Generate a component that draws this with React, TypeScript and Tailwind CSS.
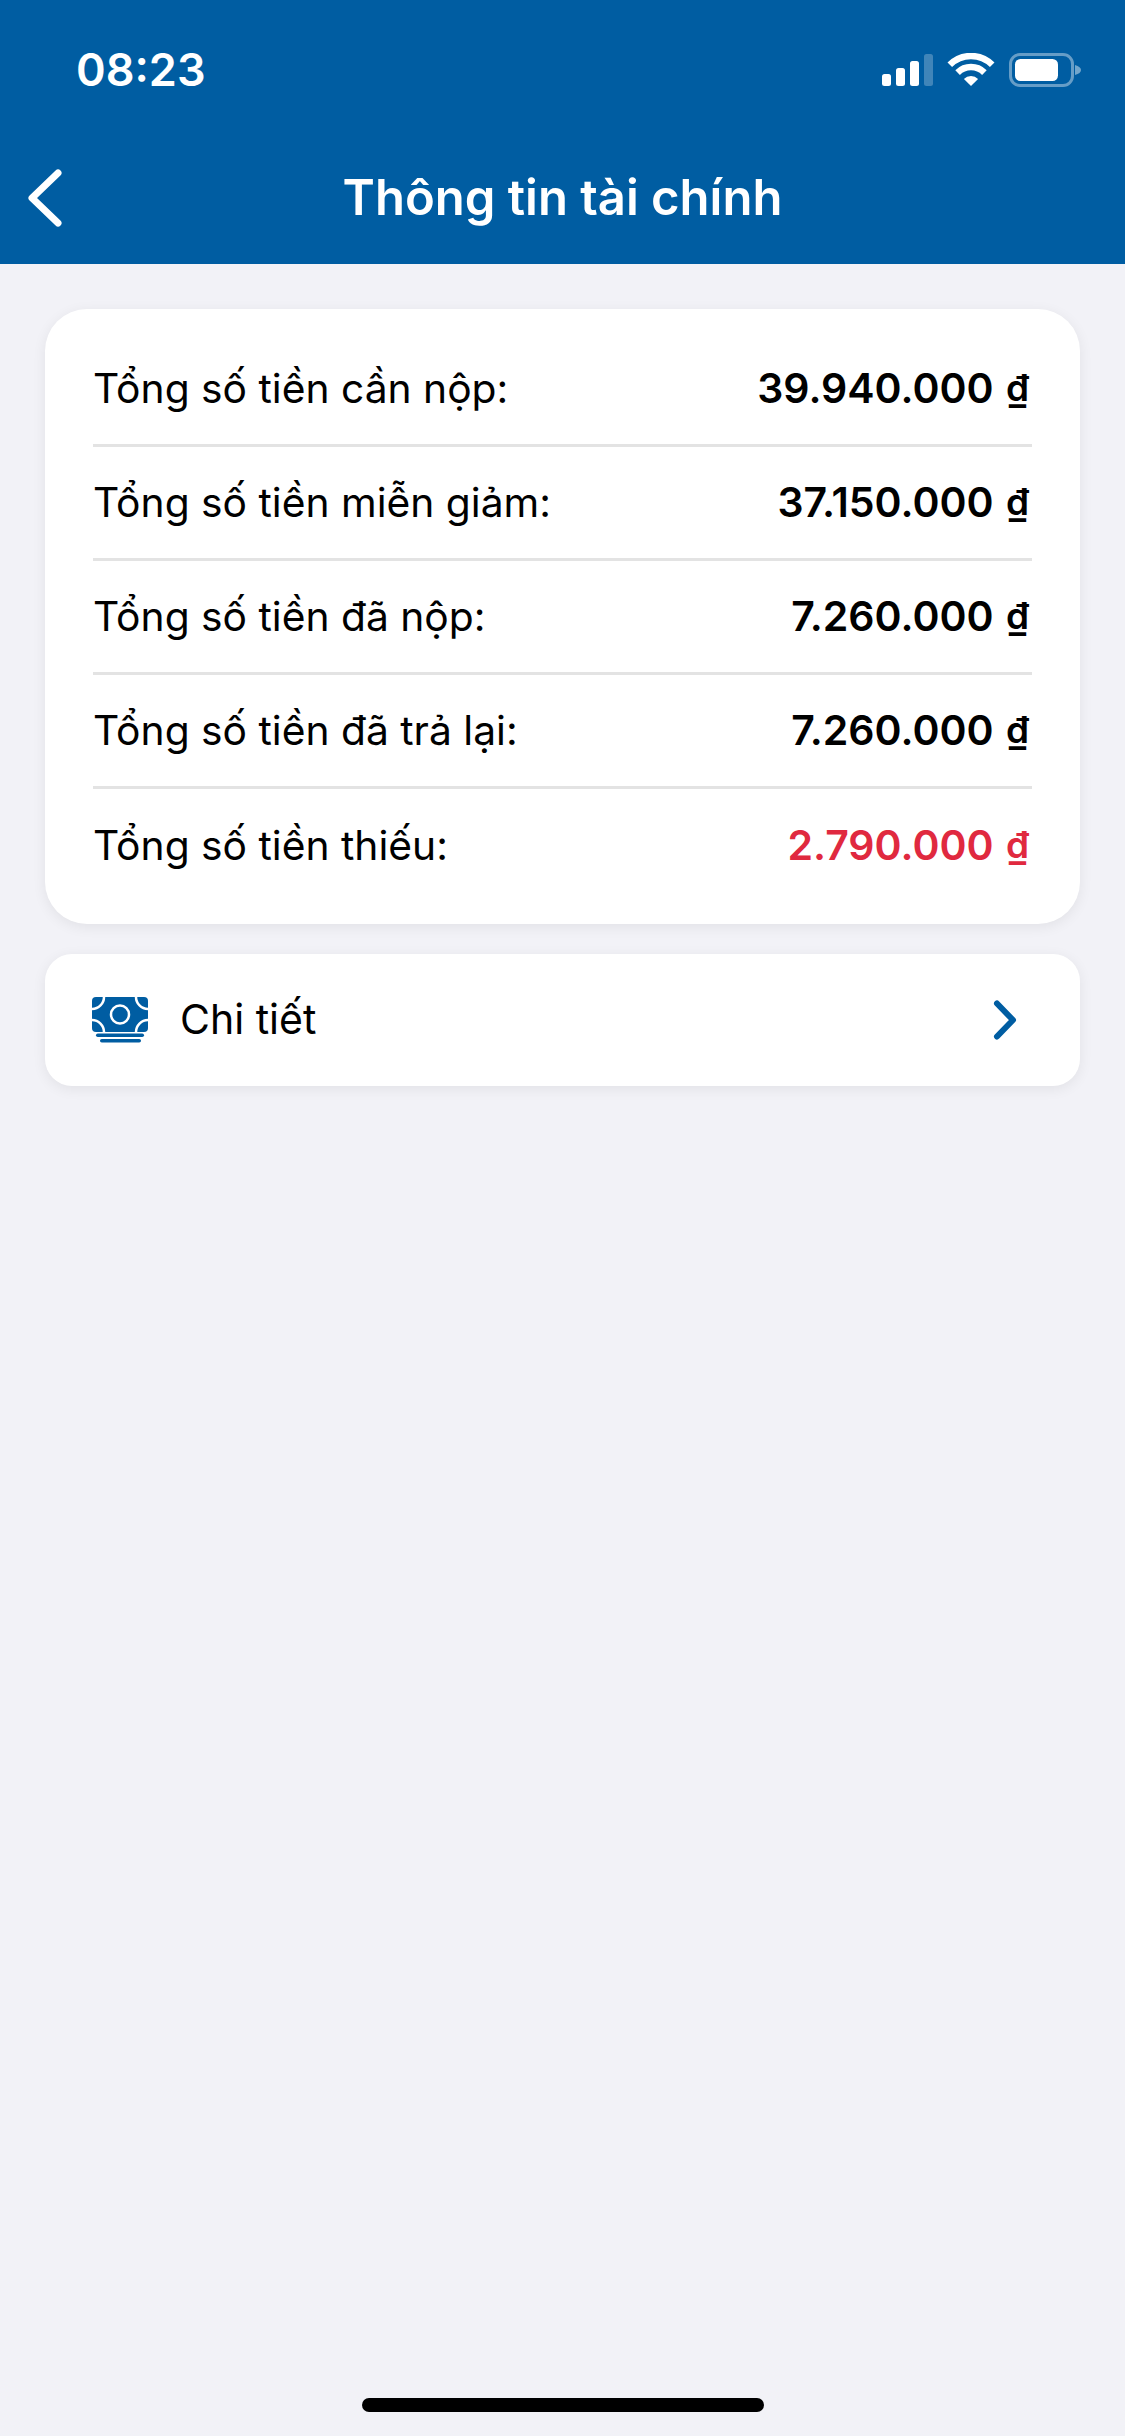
const rows = [
  { label: "Tổng số tiền cần nộp:", value: "39.940.000" },
  { label: "Tổng số tiền miễn giảm:", value: "37.150.000" },
  { label: "Tổng số tiền đã nộp:", value: "7.260.000" },
  { label: "Tổng số tiền đã trả lại:", value: "7.260.000" },
  { label: "Tổng số tiền thiếu:", value: "2.790.000", red: true },
];

function StatusIcons() {
  return (
    <svg width="200" height="34" viewBox="0 0 200 34" fill="none">
      <rect x="0" y="21" width="9" height="12" rx="2.5" fill="white" />
      <rect x="14" y="15" width="9" height="18" rx="2.5" fill="white" />
      <rect x="28" y="8" width="9" height="25" rx="2.5" fill="white" />
      <rect x="42" y="1" width="9" height="32" rx="2.5" fill="white" fillOpacity="0.25" />
      <path d="M67.800 11.800 A30 30 0 0 1 110.200 11.800" stroke="white" strokeWidth="6.500" />
      <path d="M75.600 19.600 A19 19 0 0 1 102.400 19.600" stroke="white" strokeWidth="6.500" />
      <path d="M89 33 L81.900 25.900 A10 10 0 0 1 96.100 25.900 Z" fill="white" />
      <rect x="128.500" y="1.500" width="62" height="31" rx="9.500" stroke="white" strokeOpacity="0.4" strokeWidth="3" />
      <rect x="133" y="6" width="43" height="22" rx="5.500" fill="white" />
      <path d="M193 12 C197 13 199 15 199 17 C199 19 197 21 193 22 Z" fill="white" fillOpacity="0.45" />
    </svg>
  );
}

function MoneyIcon() {
  return (
    <svg width="56" height="46" viewBox="0 0 56 46" fill="none" className="shrink-0">
      <rect width="56" height="35" rx="4" fill="#005da2" />
      <circle cx="0" cy="0" r="12" stroke="white" strokeWidth="2.500" />
      <circle cx="56" cy="0" r="12" stroke="white" strokeWidth="2.500" />
      <circle cx="0" cy="35" r="12" stroke="white" strokeWidth="2.500" />
      <circle cx="56" cy="35" r="12" stroke="white" strokeWidth="2.500" />
      <circle cx="28" cy="17.500" r="9" stroke="white" strokeWidth="2.500" />
      <rect x="4" y="36.500" width="48" height="3.500" rx="1.750" fill="#005da2" />
      <rect x="8" y="42" width="41" height="3.500" rx="1.750" fill="#005da2" />
    </svg>
  );
}

export default function App() {
  return (
    <div className="flex min-h-[2436px] flex-col bg-[#f2f2f7] font-['Inter',sans-serif] text-black">
      <header className="h-[264px] bg-[#005da2] text-white">
        <div className="flex items-center justify-between pl-[76px] pr-[43px] pt-[45px]">
          <span className="text-[45px] leading-[50px] font-semibold">08:23</span>
          <StatusIcons />
        </div>
        <div className="mt-[73px] grid grid-cols-[1fr_auto_1fr] items-center">
          <button className="pl-[26px]">
            <svg width="38" height="60" viewBox="0 0 38 60" fill="none">
              <path d="M32 5 L6 30 L32 55" stroke="white" strokeWidth="7" strokeLinecap="round" strokeLinejoin="round" />
            </svg>
          </button>
          <h1 className="text-[49px] leading-[60px] font-semibold">Thông tin tài chính</h1>
          <div />
        </div>
      </header>

      <main className="flex flex-col gap-[30px] px-[45px] pt-[45px]">
        <section className="rounded-[42px] bg-white px-[48px] pb-[21px] pt-[24px] shadow-[0_3px_14px_rgba(0,0,0,0.07)]">
          {rows.map((row, i) => (
            <div
              key={row.label}
              className={`flex h-[114px] items-center justify-between ${i < rows.length - 1 ? "border-b-[3px] border-[#e3e3e3]" : ""}`}
            >
              <span className="text-[40.750px]">{row.label}</span>
              <span className={`pr-[3px] text-[41px] font-semibold ${row.red ? "text-[#e0293f]" : ""}`}>
                {row.value} <span className="ml-[2px] align-[2px] text-[37px]">₫</span>
              </span>
            </div>
          ))}
        </section>

        <button className="flex h-[132px] items-center gap-[32px] rounded-[27px] bg-white pl-[47px] pr-[62px] shadow-[0_3px_14px_rgba(0,0,0,0.07)]">
          <MoneyIcon />
          <span className="flex-1 text-left text-[41px]">Chi tiết</span>
          <svg width="28" height="44" viewBox="0 0 28 44" fill="none">
            <path d="M7 5.500 L23 22 L7 38.500" stroke="#005da2" strokeWidth="6" strokeLinecap="round" strokeLinejoin="round" />
          </svg>
        </button>
      </main>

      <div className="mt-auto flex justify-center pb-[24px]">
        <div className="h-[14px] w-[402px] rounded-full bg-black" />
      </div>
    </div>
  );
}
